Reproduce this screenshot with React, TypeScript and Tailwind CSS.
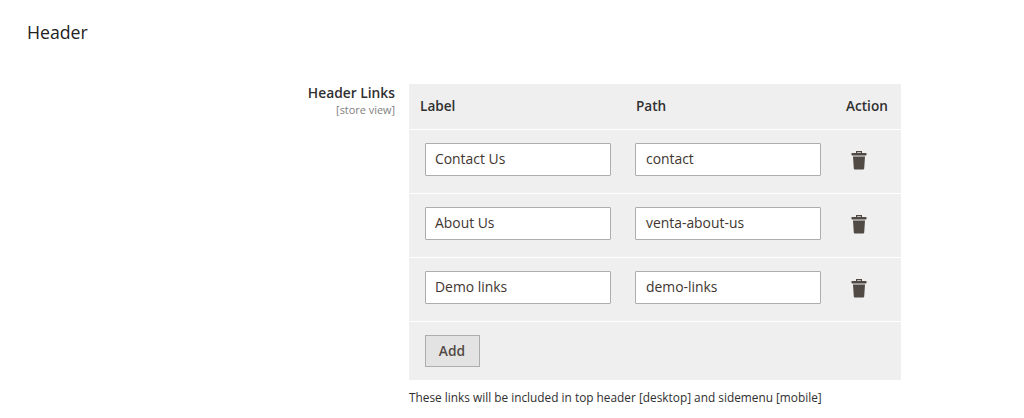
const ROWS = [
    { label: "Contact Us", path: "contact" },
    { label: "About Us", path: "venta-about-us" },
    { label: "Demo links", path: "demo-links" },
];

const TrashIcon = () => (
    <svg width="16" height="20" viewBox="0 0 16 20" fill="#514943">
        <path d="M5 3V1h6v2h-1.2V2.2H6.2V3z" />
        <rect x="0.5" y="3" width="15" height="2.4" rx="0.6" />
        <path d="M2 6.4h12l-0.8 12.2c0 .5-.4.9-.9.9H3.7c-.5 0-.9-.4-.9-.9z" />
    </svg>
);

const TextInput = ({ value, className = "" }: { value: string; className?: string }) => (
    <div className={`flex h-[33px] w-[186px] items-center rounded-[1px] border border-[#adadad] bg-white text-[13.9px] text-[#41362f] ${className}`}>
        {value}
    </div>
);

export default function App() {
    return (
        <div className="h-[418px] w-[1024px] overflow-hidden bg-white font-['Open_Sans',sans-serif] text-[#41362f]">
            <h2 className="pl-[27px] pt-[20px] text-[17.7px] font-medium leading-[24px] text-[#222222]">Header</h2>

            <div className="mt-[40px] flex">
                <div className="w-[395px] text-right">
                    <div className="text-[13.8px] font-semibold leading-[18px] text-[#303030]">Header Links</div>
                    <div className="mt-[1px] text-[10.9px] leading-[14px] text-[#808080]">[store view]</div>
                </div>

                <div className="ml-[14px] w-[492px]">
                    <div className="bg-[#efefef]">
                        <div className="grid h-[46px] grid-cols-[216px_210px_66px] items-center border-b border-white pb-[1px] text-[13.6px] font-semibold text-[#303030]">
                            <div className="pl-[11px]">Label</div>
                            <div className="pl-[11px]">Path</div>
                            <div className="pl-[11px]">Action</div>
                        </div>

                        {ROWS.map((row) => (
                            <div key={row.label} className="grid h-[64px] grid-cols-[216px_210px_66px] items-center border-b border-white pb-[4px]">
                                <div className="pl-[16px]"><TextInput value={row.label} className="pl-[9px]" /></div>
                                <div className="pl-[10px]"><TextInput value={row.path} className="pl-[10px]" /></div>
                                <div className="pl-[16px]"><TrashIcon /></div>
                            </div>
                        ))}

                        <div className="h-[58px] pl-[16px] pt-[13px]">
                            <button className="h-[32px] w-[55px] border border-[#adadad] bg-[#e3e3e3] pr-[1px] text-[13.8px] font-semibold text-[#514943]">
                                Add
                            </button>
                        </div>
                    </div>
                    <p className="mt-[9px] text-[11.85px] leading-[17px] text-[#303030]">
                        These links will be included in top header [desktop] and sidemenu [mobile]
                    </p>
                </div>
            </div>
        </div>
    );
}
